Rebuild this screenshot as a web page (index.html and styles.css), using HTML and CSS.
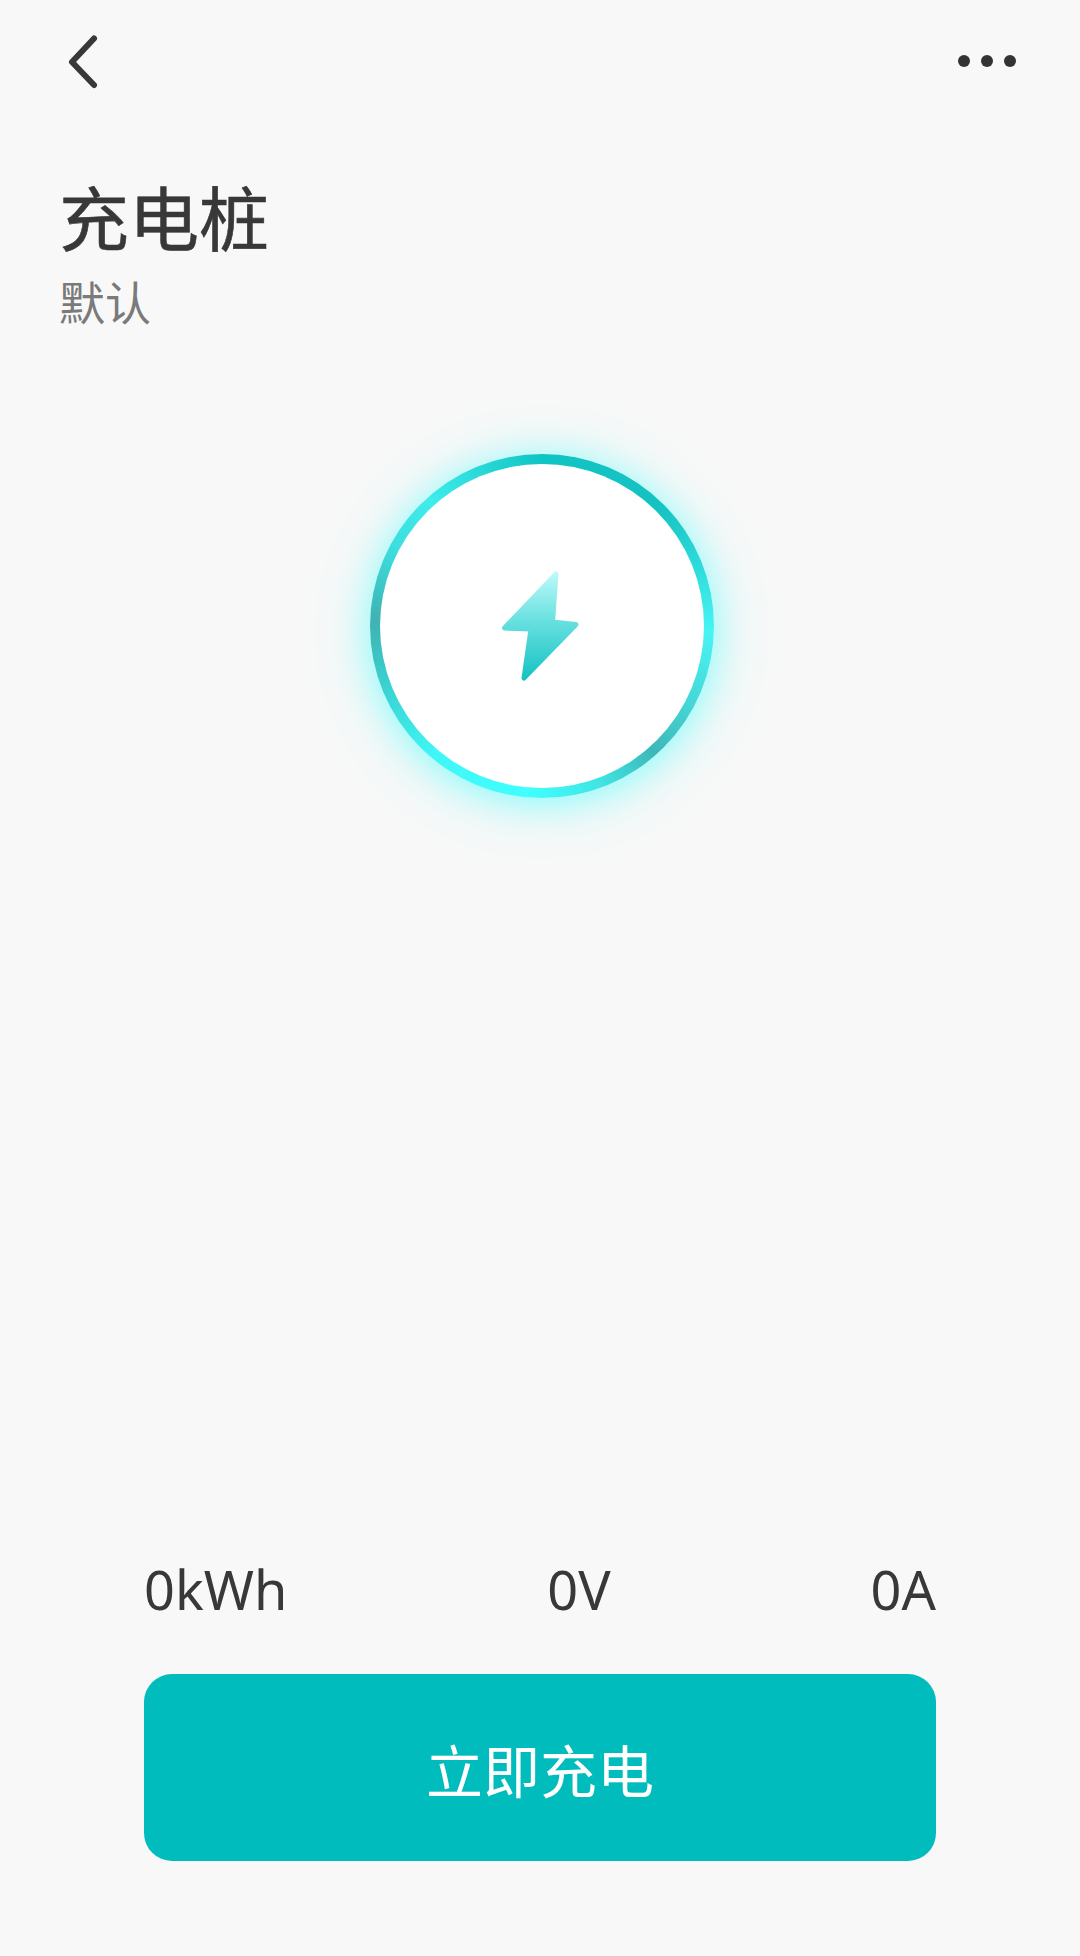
FILE: index.html
```html
<!DOCTYPE html>
<html lang="zh-CN">
<head>
  <meta charset="UTF-8">
  <title>充电桩</title>
  <link rel="stylesheet" href="styles.css">
</head>
<body>
  <div class="page">
    <div class="topbar">
      <svg class="icon-back" width="40" height="60" viewBox="0 0 40 60">
        <path d="M32 7.500 L10 31 L32 54" />
      </svg>
      <svg class="icon-more" width="60" height="60" viewBox="0 0 60 60">
        <circle cx="7" cy="30" r="6" />
        <circle cx="30" cy="30" r="6" />
        <circle cx="53" cy="30" r="6" />
      </svg>
    </div>

    <div class="heading">
      <h1>充电桩</h1>
      <p>默认</p>
    </div>

    <div class="ring-wrap">
      <div class="ring">
        <div class="ring-inner">
          <svg class="icon-bolt" width="90" height="125" viewBox="0 0 90 125">
            <defs>
              <linearGradient id="boltFill" gradientUnits="userSpaceOnUse" x1="0" y1="5" x2="0" y2="120">
                <stop offset="0" stop-color="#c4fbfb" />
                <stop offset="0.45" stop-color="#68e0e0" />
                <stop offset="1" stop-color="#0fc0c0" />
              </linearGradient>
            </defs>
            <path d="M59 10 L55.500 58 L79 60.500 L27 114 L34 65 L7.500 64 Z" />
          </svg>
        </div>
      </div>
    </div>

    <div class="stats">
      <span>0kWh</span>
      <span>0V</span>
      <span>0A</span>
    </div>
    <button class="btn-charge">立即充电</button>
  </div>
</body>
</html>
```

FILE: styles.css
```css
* {
  box-sizing: border-box;
  margin: 0;
  padding: 0;
}

body {
  background: #f8f8f8;
  font-family: "Noto Sans", "Noto Sans CJK SC", sans-serif;
}

.page {
  width: 1080px;
  height: 1956px;
  overflow: hidden;
  display: flex;
  flex-direction: column;
}

.topbar {
  display: flex;
  justify-content: space-between;
  padding: 31px 63px 0 62px;
}

.icon-back path {
  fill: none;
  stroke: #383838;
  stroke-width: 6;
  stroke-linecap: round;
  stroke-linejoin: round;
}

.icon-more circle {
  fill: #333;
}

.heading {
  padding: 85px 0 0 59px;
}

.heading h1 {
  font-family: "Noto Sans CJK SC", sans-serif;
  font-size: 70px;
  font-weight: 400;
  -webkit-text-stroke: 0.6px #383838;
  line-height: 80px;
  color: #383838;
}

.heading p {
  margin-top: 14px;
  font-family: "Noto Sans CJK SC", sans-serif;
  font-size: 46px;
  line-height: 60px;
  color: #7a7a7a;
}

.ring-wrap {
  display: flex;
  justify-content: center;
  padding-top: 124px;
  padding-left: 4px;
}

.ring {
  width: 344px;
  height: 344px;
  padding: 10px;
  border-radius: 50%;
  background: conic-gradient(#10c4c4 0deg, #16c2c2 45deg, #2fdcdc 70deg, #48f4f4 92deg, #45d6d6 118deg, #3db8b8 138deg, #40e4e4 160deg, #40ffff 185deg, #40f6f6 220deg, #3ad0d0 250deg, #3fb2b2 272deg, #3cdcdc 296deg, #40ecec 318deg, #10c4c4 360deg);
  box-shadow: 0 4px 36px rgba(64, 255, 255, 0.55), 0 6px 70px rgba(64, 255, 255, 0.18);
}

.ring-inner {
  width: 100%;
  height: 100%;
  border-radius: 50%;
  background: #fff;
  display: flex;
  justify-content: center;
  align-items: center;
}

.icon-bolt path {
  fill: url(#boltFill);
  stroke: url(#boltFill);
  stroke-width: 5;
  stroke-linejoin: round;
}

.stats {
  display: flex;
  justify-content: space-between;
  margin: auto 144px 0;
  font-size: 54px;
  line-height: 72px;
  color: #383838;
}

.btn-charge {
  display: block;
  width: 792px;
  height: 187px;
  margin: 49px 0 95px 144px;
  border: none;
  border-radius: 28px;
  background: #00bcbc;
  color: #fff;
  font-family: "Noto Sans CJK SC", sans-serif;
  font-size: 57px;
}
```
